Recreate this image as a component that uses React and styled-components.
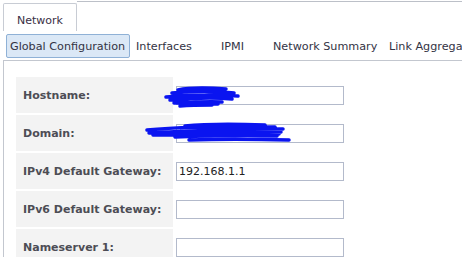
import styled, { createGlobalStyle } from "styled-components";

const GlobalStyle = createGlobalStyle`
body {
  margin: 0;
  background: #ffffff;
  font-family: "DejaVu Sans", Verdana, sans-serif;
  overflow: hidden;
}
`

const subTabs = [
    { label: "Global Configuration", width: 124, active: true },
    { label: "Interfaces", width: 83 },
    { label: "IPMI", width: 50 },
    { label: "Network Summary", width: 114 },
    { label: "Link Aggregation", width: 120 },
]

const fields = [
    { label: "Hostname:", value: "", scribble: "host" },
    { label: "Domain:", value: "", scribble: "domain" },
    { label: "IPv4 Default Gateway:", value: "192.168.1.1" },
    { label: "IPv6 Default Gateway:", value: "" },
    { label: "Nameserver 1:", value: "" },
]

// blue marker lines drawn over the redacted values
const Scribble = ({ kind }) => {
    if (kind === "host") {
        return (
            <ScribbleSvg width="78" height="24" style={{ left: 146, top: 8 }}>
                <path d="M16 5 C30 2, 50 3, 64 4 M10 8 C30 6, 55 6, 72 8 M4 12 C25 10, 50 9, 76 11 M8 15 C30 13, 50 12, 70 14 M12 18 C30 17, 50 16, 60 17 M18 21 C30 20, 40 20, 50 20 M14 10 C30 12, 50 14, 66 12 M20 16 C35 18, 50 19, 56 19" />
            </ScribbleSvg>
        )
    }
    return (
        <ScribbleSvg width="148" height="22" style={{ left: 129, top: 7 }}>
            <path d="M40 4 C60 2, 90 2, 120 3 M2 8 C30 5, 60 5, 130 5 M4 11 C40 9, 80 7, 138 7 M8 13 C40 12, 90 11, 136 10 M30 15 C60 14, 100 13, 132 14 M44 18 C70 17, 110 17, 144 18 M36 9 C70 10, 100 12, 134 12" />
        </ScribbleSvg>
    )
}

const App = () => {

    return(
        <>
        <GlobalStyle />
        <TabStrip>
            <Tab>Network</Tab>
            <StripLine />
        </TabStrip>
        <Panel>
            <SubNav>
                {subTabs.map((t) => (
                    <SubTab key={t.label} $active={t.active} $width={t.width}>{t.label}</SubTab>
                ))}
            </SubNav>
            <Content>
                {fields.map((f) => (
                    <Row key={f.label}>
                        <Label>{f.label}</Label>
                        <Input defaultValue={f.value} />
                        {f.scribble && <Scribble kind={f.scribble} />}
                    </Row>
                ))}
            </Content>
        </Panel>
        </>
    )

}

export default App;

const TabStrip = styled.div`
display: flex;
align-items: flex-end;
height: 31px;
padding-left: 3px;
`

const Tab = styled.div`
height: 27px;
width: 72px;
padding-top: 6px;
box-sizing: border-box;
border: 1px solid #c8ccd4;
border-bottom: none;
border-radius: 2px 2px 0 0;
background: #ffffff;
color: #3a2f45;
font-size: 11px;
display: flex;
align-items: center;
justify-content: center;
box-sizing: content-box;
height: 21px;
`

const StripLine = styled.div`
flex: 1;
align-self: flex-start;
margin-top: 1px;
border-top: 1px solid #bcc0c8;
`

const Panel = styled.section`
margin-left: 3px;
`

const SubNav = styled.nav`
display: flex;
gap: 2px;
height: 30px;
padding: 3px 0 0 3px;
box-sizing: border-box;
border-bottom: 1px solid #c3c7cf;
white-space: nowrap;
overflow: hidden;
`

const SubTab = styled.div`
flex: none;
width: ${(p) => p.$width}px;
height: 24px;
box-sizing: border-box;
padding: 0 3px;
display: flex;
align-items: center;
font-size: 11.2px;
color: #333344;
border: 1px solid ${(p) => (p.$active ? "#8fb1d6" : "transparent")};
border-radius: 2px;
background: ${(p) => (p.$active ? "#dbe8f6" : "transparent")};
overflow: hidden;
`

const Content = styled.div`
border-left: 1px solid #c3c7cf;
padding: 16px 0 0 12px;
box-sizing: border-box;
display: flex;
flex-direction: column;
gap: 2px;
height: 196px;
overflow: hidden;
`

const Row = styled.div`
position: relative;
flex: none;
display: flex;
align-items: center;
height: 36px;
`

const Label = styled.div`
width: 157px;
height: 100%;
box-sizing: border-box;
padding-left: 7px;
display: flex;
align-items: center;
background: #f3f3f3;
color: #4d4d55;
font-size: 11px;
font-weight: bold;
`

const Input = styled.input`
margin-left: 3px;
width: 168px;
height: 19px;
box-sizing: border-box;
border: 1px solid #b3bacb;
padding: 0 2px;
font-family: "DejaVu Sans", Verdana, sans-serif;
font-size: 11px;
color: #222222;
outline: none;
`

const ScribbleSvg = styled.svg`
position: absolute;
fill: none;
stroke: #0a14f0;
stroke-width: 3.5;
stroke-linecap: round;
`
